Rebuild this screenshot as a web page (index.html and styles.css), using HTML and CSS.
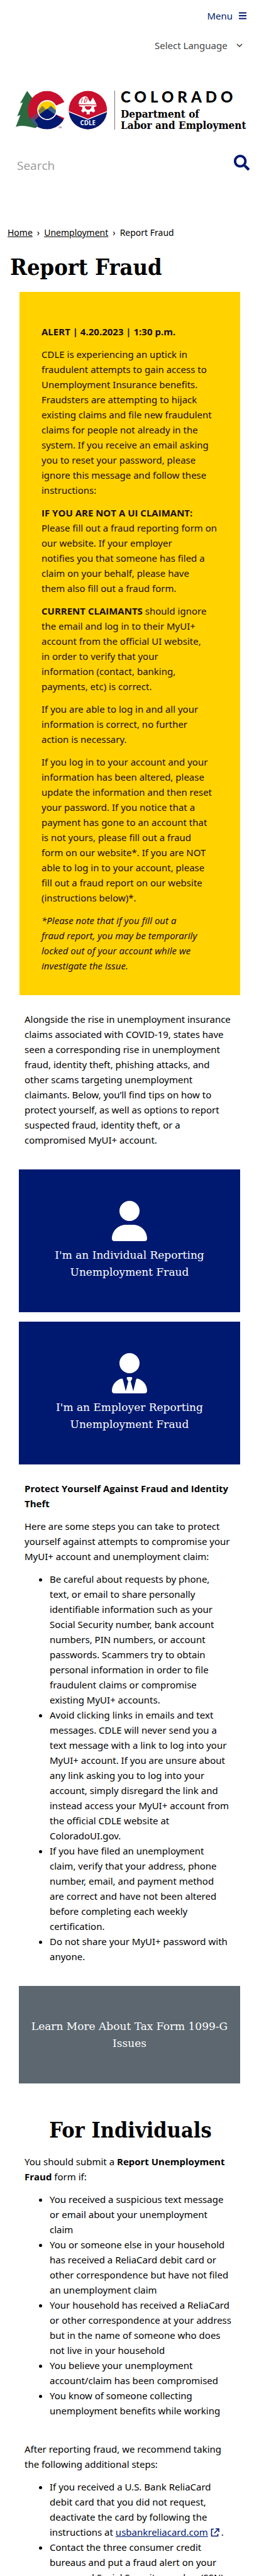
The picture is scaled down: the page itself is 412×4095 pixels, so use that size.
FILE: index.html
```html
<!DOCTYPE html>
<html lang="en">
<head>
<meta charset="utf-8">
<meta name="viewport" content="width=device-width, initial-scale=1">
<title>Report Fraud | Department of Labor and Employment</title>
<link rel="stylesheet" href="styles.css">
</head>
<body>
<header class="site-header">
  <div class="menu-row">
    <button class="menu-button" type="button">Menu
      <svg class="menu-icon" viewBox="0 0 12 12" aria-hidden="true"><path d="M0 1.500h12M0 6h12M0 10.500h12" stroke="currentColor" stroke-width="1.800"/></svg>
    </button>
  </div>
  <div class="language-row">
    <select class="language" aria-label="Select Language"><option>Select Language</option></select>
    <svg class="chevron" viewBox="0 0 10 6" aria-hidden="true"><path d="M1 1l4 4 4-4" fill="none" stroke="currentColor" stroke-width="1.600"/></svg>
  </div>
  <a class="logo" href="#" aria-label="Colorado Department of Labor and Employment">
    <svg class="logo-mark" viewBox="25 144 159 62" aria-hidden="true">
      <defs>
        <clipPath id="c-shape"><path d="M104 162A31 31 0 1 0 104 188L90.500 182.500A16 16 0 1 1 90.500 167.500Z"/></clipPath>
        <clipPath id="inner"><circle cx="76" cy="175" r="14.500"/></clipPath>
        <clipPath id="seal"><circle cx="142" cy="175" r="31"/></clipPath>
      </defs>
      <path d="M43.500 144L32 164l4.500-1.500L27.500 185l5-2L25 202.500c9-4 18-1 32 1.500l6-4-6-44-4 1z" fill="#2b6940"/>
      <g clip-path="url(#c-shape)">
        <rect x="44" y="143" width="62" height="64" fill="#c8102e"/>
        <path d="M51 195L76 172l31 22v14H45z" fill="#001970"/>
        <path d="M48 189l13-11 3 6-11 10z" fill="#7f3560"/>
        <path d="M60 206l-12-14 5-5 8 12z" fill="#405a78"/>
      </g>
      <g clip-path="url(#inner)">
        <rect x="60" y="160" width="32" height="32" fill="#ffcd00"/>
        <path d="M60 178l8-10 7 7 7-7 12 11v14H60z" fill="#7f7c37"/>
        <path d="M74 175l8-7 12 11v8H76z" fill="#426b86"/>
        <path d="M58 186l18-13 18 13v10H58z" fill="#001970"/>
      </g>
      <circle cx="76" cy="175" r="15.200" fill="none" stroke="#fff" stroke-width="1.600"/>
      <text x="94" y="205" class="tm">TM</text>
      <g clip-path="url(#seal)">
        <rect x="110" y="143" width="64" height="64" fill="#c8102e"/>
        <path d="M110 177l32 13 32-13v32h-64z" fill="#001970"/>
        <path d="M110 177l32 13 32-13" fill="none" stroke="#fff" stroke-width="1.500"/>
      </g>
      <path d="M127 165.500c0-7 4-11 10-13l4 1 3 6 2 2 4-7 3 5 3 6.500z" fill="#fff"/>
      <path d="M131.500 163l1.500-7M136 163l2-8 3 1-1 5-4 2z" fill="none" stroke="#c8102e" stroke-width="1"/>
      <path d="M128 167h28v2l-4 1v3l2 3-3 3-3-2-3 1v4h-5v-4l-3-1-3 2-3-3 2-3v-3l-5-1z" fill="#fff"/>
      <path d="M137 169h11a5.500 5.500 0 0 1-11 0z" fill="#c8102e"/>
      <text x="142" y="199" class="seal-text" text-anchor="middle">CDLE</text>
    </svg>
    <span class="logo-text">
      <span class="logo-state">COLORADO</span>
      <span class="logo-dept">Department of</span>
      <span class="logo-dept">Labor and Employment</span>
    </span>
  </a>
  <form class="search">
    <input class="search-input" type="search" placeholder="Search" aria-label="Search">
    <button class="search-button" type="submit" aria-label="Search">
      <svg viewBox="0 0 512 512" aria-hidden="true"><path fill="currentColor" d="M505 442.700L405.300 343c-4.500-4.500-10.600-7-17-7H372c27.600-35.300 44-79.700 44-128C416 93.100 322.900 0 208 0S0 93.100 0 208s93.100 208 208 208c48.300 0 92.700-16.400 128-44v16.300c0 6.400 2.500 12.500 7 17l99.700 99.700c9.400 9.400 24.600 9.400 33.900 0l28.300-28.300c9.400-9.400 9.400-24.600.1-34zM208 336c-70.700 0-128-57.200-128-128 0-70.700 57.200-128 128-128 70.700 0 128 57.200 128 128 0 70.700-57.200 128-128 128z"/></svg>
    </button>
  </form>
</header>
<main>
  <nav class="breadcrumb" aria-label="Breadcrumb"><a href="#">Home</a><span>›</span><a href="#">Unemployment</a><span>›</span><span>Report Fraud</span></nav>
  <h1 class="page-title">Report Fraud</h1>
  <section class="alert">
    <p><strong>ALERT | 4.20.2023 | 1:30 p.m.</strong></p>
    <p>CDLE is experiencing an uptick in fraudulent attempts to gain access to Unemployment Insurance benefits. Fraudsters are attempting to hijack existing claims and file new fraudulent claims for people not already in the system. If you receive an email asking you to reset your password, please ignore this message and follow these instructions:</p>
    <p><strong>IF YOU ARE NOT A UI CLAIMANT:</strong><br>Please fill out a fraud reporting form on our website. If your employer<br>notifies you that someone has filed a<br>claim on your behalf, please have<br>them also fill out a fraud form.</p>
    <p><strong>CURRENT CLAIMANTS</strong> should ignore the email and log in to their MyUI+ account from the official UI website,<br>in order to verify that your<br>information (contact, banking,<br>payments, etc) is correct.</p>
    <p>If you are able to log in and all your information is correct, no further<br>action is necessary.</p>
    <p>If you log in to your account and your information has been altered, please update the information and then reset your password. If you notice that a payment has gone to an account that<br>is not yours, please fill out a fraud<br>form on our website*. If you are NOT<br>able to log in to your account, please<br>fill out a fraud report on our website<br>(instructions below)*.</p>
    <p><em>*Please note that if you fill out a<br>fraud report, you may be temporarily<br>locked out of your account while we<br>investigate the issue.</em></p>
  </section>
  <section class="prose intro">
    <p>Alongside the rise in unemployment insurance claims associated with COVID-19, states have seen a corresponding rise in unemployment<br>fraud, identity theft, phishing attacks, and<br>other scams targeting unemployment<br>claimants. Below, you’ll find tips on how to<br>protect yourself, as well as options to report<br>suspected fraud, identity theft, or a<br>compromised MyUI+ account.</p>
  </section>
  <div class="cards">
    <a class="card" href="#">
      <svg class="card-icon" viewBox="0 0 448 512" aria-hidden="true"><path fill="currentColor" d="M224 256A128 128 0 1 0 224 0a128 128 0 1 0 0 256zm-45.700 48C79.800 304 0 383.800 0 482.300 0 498.700 13.300 512 29.700 512h388.600c16.400 0 29.700-13.300 29.700-29.700C448 383.800 368.200 304 269.700 304z"/></svg>
      <span>I'm an Individual Reporting Unemployment Fraud</span>
    </a>
    <a class="card" href="#">
      <svg class="card-icon" viewBox="0 0 448 512" aria-hidden="true"><path fill="currentColor" d="M96 128a128 128 0 1 0 256 0 128 128 0 1 0-256 0zm94.500 200.200l18.600 31L175.800 483.100l-36-146.900c-2-8.100-9.800-13.400-17.900-11.300C51.900 342.400 0 405.800 0 481.300 0 498.200 13.700 512 30.700 512h386.600c17 0 30.700-13.800 30.700-30.700 0-75.500-51.900-138.900-121.900-156.400-8.100-2-15.900 3.300-17.900 11.300l-36 146.900-33.300-123.900 18.600-31c6.400-10.700-1.300-24.200-13.700-24.200h-39.500c-12.400 0-20.100 13.500-13.800 24.200z"/></svg>
      <span>I'm an Employer Reporting Unemployment Fraud</span>
    </a>
  </div>
  <section class="prose protect">
    <p><strong>Protect Yourself Against Fraud and Identity Theft</strong></p>
    <p>Here are some steps you can take to protect yourself against attempts to compromise your MyUI+ account and unemployment claim:</p>
    <ul>
      <li>Be careful about requests by phone,<br>text, or email to share personally<br>identifiable information such as your<br>Social Security number, bank account<br>numbers, PIN numbers, or account<br>passwords. Scammers try to obtain<br>personal information in order to file<br>fraudulent claims or compromise<br>existing MyUI+ accounts.</li>
      <li>Avoid clicking links in emails and text messages. CDLE will never send you a<br>text message with a link to log into your MyUI+ account. If you are unsure about any link asking you to log into your<br>account, simply disregard the link and instead access your MyUI+ account from the official CDLE website at<br>ColoradoUI.gov.</li>
      <li>If you have filed an unemployment<br>claim, verify that your address, phone<br>number, email, and payment method<br>are correct and have not been altered<br>before completing each weekly<br>certification.</li>
      <li>Do not share your MyUI+ password with anyone.</li>
    </ul>
  </section>
  <a class="card card-muted" href="#"><span>Learn More About Tax Form 1099-G Issues</span></a>
  <section class="prose individuals">
    <h2 class="section-title">For Individuals</h2>
    <p>You should submit a <strong>Report Unemployment Fraud</strong> form if:</p>
    <ul>
      <li>You received a suspicious text message<br>or email about your unemployment<br>claim</li>
      <li>You or someone else in your household has received a ReliaCard debit card or other correspondence but have not filed an unemployment claim</li>
      <li>Your household has received a ReliaCard or other correspondence at your address but in the name of someone who does<br>not live in your household</li>
      <li>You believe your unemployment<br>account/claim has been compromised</li>
      <li>You know of someone collecting<br>unemployment benefits while working</li>
    </ul>
  </section>
  <section class="prose after">
    <p>After reporting fraud, we recommend taking the following additional steps:</p>
    <ul>
      <li>If you received a U.S. Bank ReliaCard<br>debit card that you did not request,<br>deactivate the card by following the<br>instructions at <a class="external" href="#">usbankreliacard.com<svg class="external-icon" viewBox="0 0 14 14" aria-hidden="true"><path d="M5 1.500H1.500v11h10V9M8 1h5v5M13 1L6 8" fill="none" stroke="currentColor" stroke-width="1.600"/></svg></a>.</li>
      <li>Contact the three consumer credit<br>bureaus and put a fraud alert on your<br>name and Social Security number (SSN)</li>
    </ul>
  </section>
</main>
</body>
</html>
```
FILE: styles.css
```css
* { box-sizing: border-box; }
html { overflow: hidden; }
body {
  margin: 0;
  height: 100vh;
  overflow: hidden;
  background: #fff;
  color: #000;
  font: 15px/24px "Noto Sans", "Open Sans", sans-serif;
}
strong { font-family: "Open Sans", "Noto Sans", sans-serif; line-height: 20px; }
.menu-row { display: flex; justify-content: flex-end; padding: 13px 20px 0; }
.menu-button {
  display: flex;
  align-items: center;
  gap: 10px;
  padding: 0;
  border: 0;
  background: none;
  color: #001970;
  font: inherit;
}
.menu-icon { width: 12px; height: 12px; }
.language-row {
  display: flex;
  justify-content: flex-end;
  align-items: center;
  gap: 14px;
  padding: 23px 26px 0;
  color: #444;
}
.language {
  appearance: none;
  padding: 0;
  border: 0;
  background: none;
  color: inherit;
  font: inherit;
}
.chevron { width: 10px; height: 6px; }
.logo {
  display: flex;
  padding: 60px 24px 0 25px;
  color: #000;
  text-decoration: none;
}
.logo-mark { flex: none; width: 158px; height: 62px; padding-right: 1px; border-right: 1px solid #777; }
.logo-text { display: flex; flex-direction: column; padding-left: 9px; white-space: nowrap; }
.logo-state { font: 900 24px/20px Lato, sans-serif; letter-spacing: 6px; margin-bottom: 8px; }
.logo-dept { font: bold 17px/18px "DejaVu Serif Condensed", "DejaVu Serif", serif; }
.tm { font: 4px "Open Sans", sans-serif; fill: #333; }
.seal-text { font: bold 10px "Open Sans", sans-serif; fill: #fff; }
.search { display: flex; align-items: flex-start; padding: 38px 15px 0 27px; }
.search-input {
  flex: 1;
  min-width: 0;
  padding: 4px 0 0;
  border: 0;
  outline: 0;
  background: none;
  font: 19px/26px "Open Sans", sans-serif;
}
.search-input::placeholder { color: #999; opacity: 1; }
.search-button { width: 25px; height: 25px; padding: 0; border: 0; background: none; color: #001970; }
.search-button svg { display: block; }
.breadcrumb { display: flex; gap: 7px; padding: 82px 12px 0; font-size: 14px; }
.breadcrumb a { color: #000; text-decoration: underline; }
.page-title { margin: 16px 16px 14px; font: bold 36px/52px "DejaVu Serif Condensed", "DejaVu Serif", serif; }
.alert {
  margin: 0 30px 0 31px;
  padding: 51px 28px 35px 35px;
  background: #ffd200;
  color: #1a0a00;
}
p { margin: 0 0 12px; }
p:last-child { margin-bottom: 0; }
.prose { padding: 0 36px 0 39px; }
.intro { padding-top: 26px; padding-bottom: 35px; }
.cards { display: grid; gap: 15px; }
.card {
  display: flex;
  flex-direction: column;
  align-items: center;
  gap: 8px;
  margin: 0 30px;
  padding: 49px 16px 50px;
  background: #001970;
  color: #fff;
  font: 17px/27px "DejaVu Serif", serif;
  text-align: center;
  text-decoration: none;
}
.card-icon { width: 56px; height: 66px; }
.card-muted { padding: 51px 8px 50px; background: #5c6770; }
.protect { padding-top: 26px; padding-bottom: 35px; }
ul { margin: 0; padding: 0 0 0 40px; }
.section-title { margin: 0 0 12px; font: bold 34px/52px "DejaVu Serif Condensed", "DejaVu Serif", serif; text-align: center; }
.individuals { padding-top: 48px; }
.after { padding-top: 37px; }
.external { color: #001970; }
.external-icon { width: 14px; height: 14px; margin: 0 3px 0 4px; vertical-align: -2px; }
```
